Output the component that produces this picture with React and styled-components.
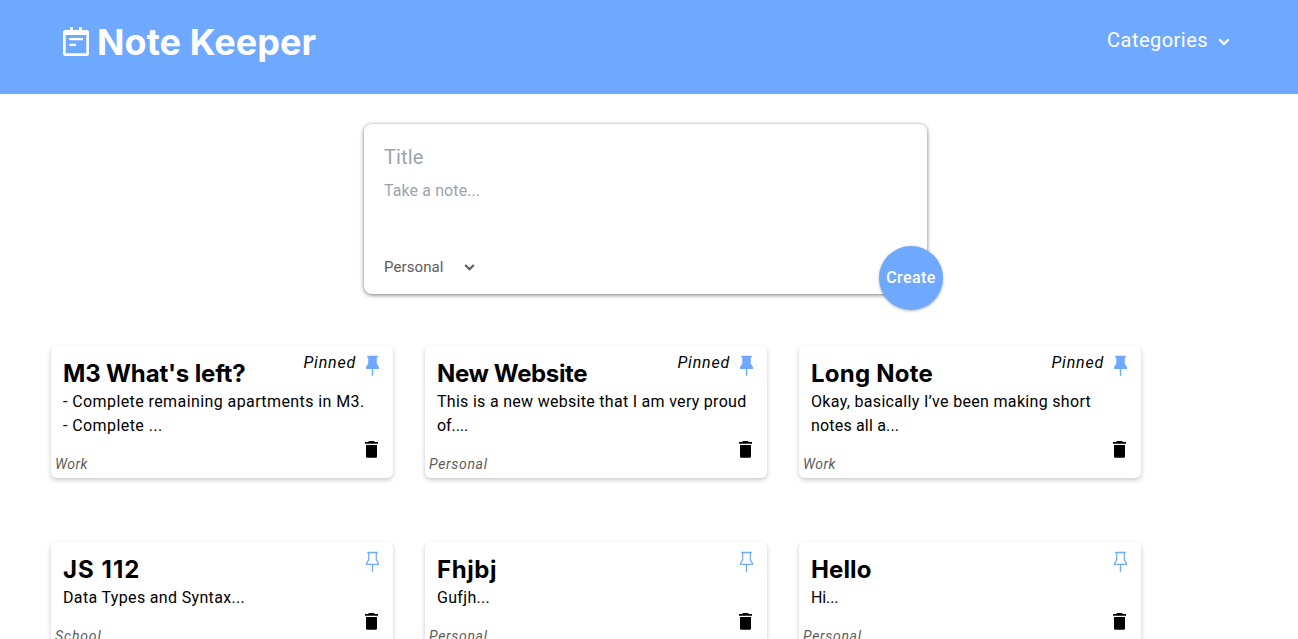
import React from "react";
import styled, { createGlobalStyle } from "styled-components";

const BLUE = "#6fa8ff";

const GlobalStyle = createGlobalStyle`
  * { box-sizing: border-box; margin: 0; padding: 0; }
  body {
    background: #fff;
    color: #000;
    font-family: Roboto, "Liberation Sans", sans-serif;
    font-size: 16px;
    line-height: 24px;
    overflow: hidden;
  }
  button { border: 0; background: none; font: inherit; cursor: pointer; }
`;

const Page = styled.div`
  height: 100vh;
  overflow: hidden;
`;

const Header = styled.header`
  display: flex;
  justify-content: space-between;
  align-items: flex-start;
  height: 94px;
  padding: 22px 68px 0 60px;
  background: ${BLUE};
  color: #fff;
`;

const Brand = styled.h1`
  display: flex;
  align-items: center;
  height: 40px;
  font: 700 36px/40px Inter, sans-serif;
  letter-spacing: 0.08px;

  svg { margin-right: 3px; }
`;

const CategoryMenu = styled.button`
  display: flex;
  align-items: center;
  gap: 10px;
  height: 36px;
  color: #fff;
  font-size: 20px;
  letter-spacing: 0.47px;

  svg { margin-top: 4px; }
`;

const NoteForm = styled.form`
  position: relative;
  width: 563px;
  height: 170px;
  margin: 30px 0 0 364px;
  padding: 19px 20px 17px;
  display: flex;
  flex-direction: column;
  border-radius: 8px;
  background: #fff;
  box-shadow: 0 1px 4px rgba(0, 0, 0, 0.55);
`;

const TitleField = styled.div`
  color: #9ca3af;
  font-size: 20px;
  line-height: 28px;
  letter-spacing: 0.15px;
`;

const BodyField = styled.div`
  flex: 1;
  margin-top: 8px;
  color: #9ca3af;
  letter-spacing: 0.1px;
`;

const CategorySelect = styled.div`
  display: flex;
  align-items: center;
  justify-content: space-between;
  width: 91px;
  height: 20px;
  color: #5c5c5c;
  font-size: 15px;
  line-height: 20px;
  letter-spacing: 0.1px;
`;

const CreateButton = styled.button`
  position: absolute;
  right: -16px;
  bottom: -16px;
  width: 64px;
  height: 64px;
  border-radius: 50%;
  background: ${BLUE};
  color: #fff;
  font-weight: 500;
  letter-spacing: 0.4px;
  box-shadow: 0 1px 3px rgba(0, 0, 0, 0.3);
`;

const Notes = styled.main`
  display: grid;
  grid-template-columns: repeat(3, 342px);
  gap: 64px 32px;
  align-items: start;
  margin: 52px 0 0 51px;
`;

const Card = styled.article`
  border-radius: 6px;
  background: #fff;
  box-shadow: 0 2px 5px rgba(0, 0, 0, 0.22);
`;

const CardHead = styled.div`
  display: flex;
  justify-content: space-between;
  height: 44px;
  padding: 12px 14px 0 12px;
`;

const CardTitle = styled.h2`
  font: 700 24px/32px Inter, sans-serif;
  letter-spacing: ${(p) => p.$track}px;
`;

const PinGroup = styled.div`
  display: flex;
  align-items: flex-start;
  gap: 10px;
  margin-top: -7px;
  font-style: italic;
  letter-spacing: 0.8px;

  svg { margin-top: 4px; }
`;

const Line = styled.p`
  padding-left: 12px;
  white-space: pre;
  letter-spacing: ${(p) => p.$track}px;
`;

const CardFoot = styled.div`
  display: flex;
  justify-content: space-between;
  height: 40px;
  padding: 3px 15px 0 4px;
`;

const Category = styled.span`
  align-self: flex-end;
  padding-bottom: 4px;
  color: #5c5c5c;
  font-size: 14px;
  line-height: 20px;
  font-style: italic;
  letter-spacing: ${(p) => p.$track}px;
`;

const NoteIcon = () => (
  <svg width="34" height="34" viewBox="0 0 34 34" fill="#fff">
    <path
      fillRule="evenodd"
      d="M10 2.300h3V5h6V2.300h3V5h4.500a2.500 2.500 0 0 1 2.500 2.500v21a2.500 2.500 0 0 1-2.500 2.500h-21A2.500 2.500 0 0 1 3 28.500v-21A2.500 2.500 0 0 1 5.500 5H10zM5.700 10v18.300h20.600V10z"
    />
    <path d="M9.300 13H23v2.300H9.300zM9.300 18.700H16V21H9.300z" />
  </svg>
);

const Chevron = ({ size }) => (
  <svg width={size} height={size} viewBox="0 0 12 12" fill="none" stroke="currentColor" strokeWidth="2.300">
    <path d="M1.300 3.300 6 8l4.700-4.700" />
  </svg>
);

const Pin = ({ filled }) => (
  <svg width="13" height="22" viewBox="0 0 13 22" fill={BLUE}>
    {filled ? (
      <path d="M1.200.8h10.600v1.800h-1v6.100L13 12v1.900H7.200V20l-.700 1.500-.700-1.500v-6.100H0V12l2.200-3.300V2.600h-1z" />
    ) : (
      <path
        fillRule="evenodd"
        d="M1.200.8h10.600v1.400h-.9v6.500L13 12v1.900H7.200V20l-.700 1.500-.700-1.500v-6.100H0V12l2.100-3.300V2.200h-.9zM3.300 2.200v6.900l-2 3.200v.4h10.400v-.4L9.700 9.100V2.200z"
      />
    )}
  </svg>
);

const Trash = () => (
  <svg width="13" height="17" viewBox="0 0 13 17">
    <path d="M4 0h5l.9 1H13v1.800H0V1h3.100zM1 4h11v11.500q0 1.300-1.300 1.300H2.300Q1 16.800 1 15.500z" />
  </svg>
);

const NOTES = [
  { title: "M3 What's left?", track: -0.15, pinned: true, category: "Work", catTrack: 0.4,
    lines: [["- Complete remaining apartments in M3.", 0.41], ["- Complete ...", 0.42]] },
  { title: "New Website", track: -0.38, pinned: true, category: "Personal", catTrack: 0.68,
    lines: [["This is a new website that I am very proud", 0.29], ["of....", -0.09]] },
  { title: "Long Note", track: 0.23, pinned: true, category: "Work", catTrack: 0.4,
    lines: [["Okay, basically I’ve been making short", 0.32], ["notes all a...", 0.18]] },
  { title: "JS 112", track: 1.05, category: "School", catTrack: 0.85,
    lines: [["Data Types and Syntax...", 0.34]] },
  { title: "Fhjbj", track: 0.6, category: "Personal", catTrack: 0.68,
    lines: [["Gufjh...", 0.32]] },
  { title: "Hello", track: 0.1, category: "Personal", catTrack: 0.68,
    lines: [["Hi...", -0.1]] },
];

export default function App() {
  return (
    <Page>
      <GlobalStyle />
      <Header>
        <Brand><NoteIcon />Note Keeper</Brand>
        <CategoryMenu>Categories <Chevron size={12} /></CategoryMenu>
      </Header>
      <NoteForm>
        <TitleField>Title</TitleField>
        <BodyField>Take a note...</BodyField>
        <CategorySelect>Personal <Chevron size={11} /></CategorySelect>
        <CreateButton type="button">Create</CreateButton>
      </NoteForm>
      <Notes>
        {NOTES.map((n) => (
          <Card key={n.title}>
            <CardHead>
              <CardTitle $track={n.track}>{n.title}</CardTitle>
              <PinGroup>{n.pinned && "Pinned"}<Pin filled={n.pinned} /></PinGroup>
            </CardHead>
            {n.lines.map(([text, track]) => <Line key={text} $track={track}>{text}</Line>)}
            <CardFoot>
              <Category $track={n.catTrack}>{n.category}</Category>
              <Trash />
            </CardFoot>
          </Card>
        ))}
      </Notes>
    </Page>
  );
}
